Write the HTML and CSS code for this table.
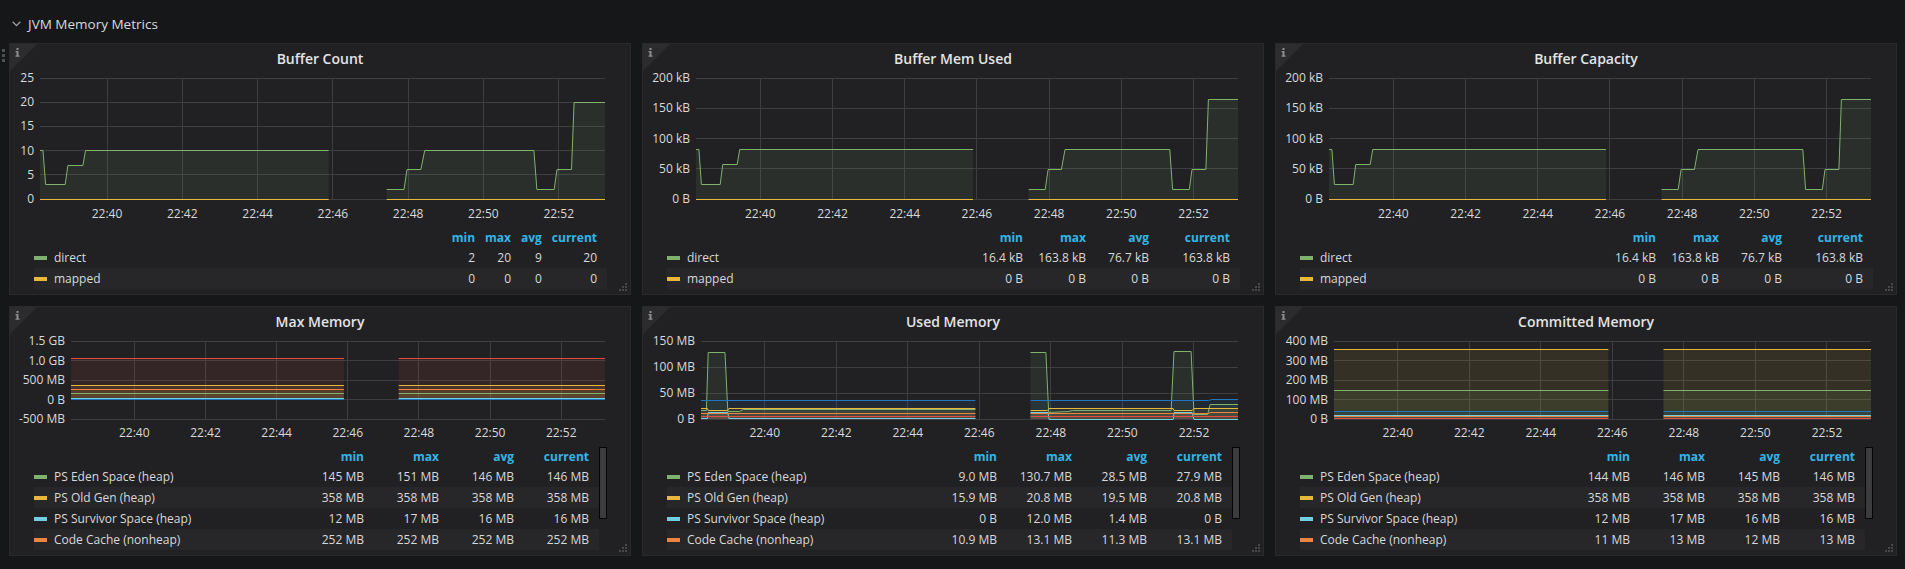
FILE: index.html
```html
<!DOCTYPE html>
<html lang="en">
<head>
<meta charset="utf-8">
<title>JVM Memory Metrics</title>
<link rel="stylesheet" href="styles.css">
</head>
<body>
<div class="dashboard">
  <div class="row-header">
    <svg class="chevron" width="9" height="6" viewBox="0 0 9 6"><polyline points="0.7,0.8 4.5,4.6 8.3,0.8"/></svg>
    <span class="row-title">JVM Memory Metrics</span>
  </div>

  <div class="panel-grid">
    <!-- Row 1 -->
    <section class="panel panel-tall">
      <span class="info-corner"><svg class="info-icon" width="5" height="9" viewBox="0 0 5 9"><rect x="1.5" y="0" width="2" height="2"/><path d="M0.5 3h3v4.5h1v1.2h-4v-1.2h1v-3.3h-1z"/></svg></span>
      <span class="drag-handle"><i></i><i></i><i></i></span>
      <h2 class="panel-title">Buffer Count</h2>
      <svg class="chart chart-tall" id="c-buffer-count" width="620" height="159" viewBox="0 0 620 159"></svg>
      <div class="legend">
        <table class="legend-table">
          <thead><tr><th class="name"></th><th>min</th><th>max</th><th>avg</th><th>current</th></tr></thead>
          <tbody>
            <tr><td class="name"><i class="swatch green"></i>direct</td><td>2</td><td>20</td><td>9</td><td>20</td></tr>
            <tr><td class="name"><i class="swatch yellow"></i>mapped</td><td>0</td><td>0</td><td>0</td><td>0</td></tr>
          </tbody>
        </table>
      </div>
      <svg class="resize-handle" width="9" height="9" viewBox="0 0 9 9"><rect x="6" y="0" width="2" height="2"/><rect x="3" y="3" width="2" height="2"/><rect x="6" y="3" width="2" height="2"/><rect x="0" y="6" width="2" height="2"/><rect x="3" y="6" width="2" height="2"/><rect x="6" y="6" width="2" height="2"/></svg>
    </section>

    <section class="panel panel-tall">
      <span class="info-corner"><svg class="info-icon" width="5" height="9" viewBox="0 0 5 9"><rect x="1.5" y="0" width="2" height="2"/><path d="M0.5 3h3v4.5h1v1.2h-4v-1.2h1v-3.3h-1z"/></svg></span>
      <h2 class="panel-title">Buffer Mem Used</h2>
      <svg class="chart chart-tall" id="c-buffer-mem" width="620" height="159" viewBox="0 0 620 159"></svg>
      <div class="legend">
        <table class="legend-table fixed kb">
          <thead><tr><th class="name"></th><th>min</th><th>max</th><th>avg</th><th>current</th></tr></thead>
          <tbody>
            <tr><td class="name"><i class="swatch green"></i>direct</td><td>16.4 kB</td><td>163.8 kB</td><td>76.7 kB</td><td>163.8 kB</td></tr>
            <tr><td class="name"><i class="swatch yellow"></i>mapped</td><td>0 B</td><td>0 B</td><td>0 B</td><td>0 B</td></tr>
          </tbody>
        </table>
      </div>
      <svg class="resize-handle" width="9" height="9" viewBox="0 0 9 9"><rect x="6" y="0" width="2" height="2"/><rect x="3" y="3" width="2" height="2"/><rect x="6" y="3" width="2" height="2"/><rect x="0" y="6" width="2" height="2"/><rect x="3" y="6" width="2" height="2"/><rect x="6" y="6" width="2" height="2"/></svg>
    </section>

    <section class="panel panel-tall">
      <span class="info-corner"><svg class="info-icon" width="5" height="9" viewBox="0 0 5 9"><rect x="1.5" y="0" width="2" height="2"/><path d="M0.5 3h3v4.5h1v1.2h-4v-1.2h1v-3.3h-1z"/></svg></span>
      <h2 class="panel-title">Buffer Capacity</h2>
      <svg class="chart chart-tall" id="c-buffer-cap" width="620" height="159" viewBox="0 0 620 159"></svg>
      <div class="legend">
        <table class="legend-table fixed kb">
          <thead><tr><th class="name"></th><th>min</th><th>max</th><th>avg</th><th>current</th></tr></thead>
          <tbody>
            <tr><td class="name"><i class="swatch green"></i>direct</td><td>16.4 kB</td><td>163.8 kB</td><td>76.7 kB</td><td>163.8 kB</td></tr>
            <tr><td class="name"><i class="swatch yellow"></i>mapped</td><td>0 B</td><td>0 B</td><td>0 B</td><td>0 B</td></tr>
          </tbody>
        </table>
      </div>
      <svg class="resize-handle" width="9" height="9" viewBox="0 0 9 9"><rect x="6" y="0" width="2" height="2"/><rect x="3" y="3" width="2" height="2"/><rect x="6" y="3" width="2" height="2"/><rect x="0" y="6" width="2" height="2"/><rect x="3" y="6" width="2" height="2"/><rect x="6" y="6" width="2" height="2"/></svg>
    </section>

    <!-- Row 2 -->
    <section class="panel panel-short">
      <span class="info-corner"><svg class="info-icon" width="5" height="9" viewBox="0 0 5 9"><rect x="1.5" y="0" width="2" height="2"/><path d="M0.5 3h3v4.5h1v1.2h-4v-1.2h1v-3.3h-1z"/></svg></span>
      <h2 class="panel-title">Max Memory</h2>
      <svg class="chart chart-short" id="c-max-mem" width="620" height="115" viewBox="0 0 620 115"></svg>
      <div class="legend legend-scroll">
        <table class="legend-table fixed mb">
          <thead><tr><th class="name"></th><th>min</th><th>max</th><th>avg</th><th>current</th></tr></thead>
          <tbody>
            <tr><td class="name"><i class="swatch green"></i>PS Eden Space (heap)</td><td>145 MB</td><td>151 MB</td><td>146 MB</td><td>146 MB</td></tr>
            <tr><td class="name"><i class="swatch yellow"></i>PS Old Gen (heap)</td><td>358 MB</td><td>358 MB</td><td>358 MB</td><td>358 MB</td></tr>
            <tr><td class="name"><i class="swatch cyan"></i>PS Survivor Space (heap)</td><td>12 MB</td><td>17 MB</td><td>16 MB</td><td>16 MB</td></tr>
            <tr><td class="name"><i class="swatch orange"></i>Code Cache (nonheap)</td><td>252 MB</td><td>252 MB</td><td>252 MB</td><td>252 MB</td></tr>
          </tbody>
        </table>
        <div class="scrollbar"><div class="thumb"></div></div>
      </div>
      <svg class="resize-handle" width="9" height="9" viewBox="0 0 9 9"><rect x="6" y="0" width="2" height="2"/><rect x="3" y="3" width="2" height="2"/><rect x="6" y="3" width="2" height="2"/><rect x="0" y="6" width="2" height="2"/><rect x="3" y="6" width="2" height="2"/><rect x="6" y="6" width="2" height="2"/></svg>
    </section>

    <section class="panel panel-short">
      <span class="info-corner"><svg class="info-icon" width="5" height="9" viewBox="0 0 5 9"><rect x="1.5" y="0" width="2" height="2"/><path d="M0.5 3h3v4.5h1v1.2h-4v-1.2h1v-3.3h-1z"/></svg></span>
      <h2 class="panel-title">Used Memory</h2>
      <svg class="chart chart-short" id="c-used-mem" width="620" height="115" viewBox="0 0 620 115"></svg>
      <div class="legend legend-scroll">
        <table class="legend-table fixed mb">
          <thead><tr><th class="name"></th><th>min</th><th>max</th><th>avg</th><th>current</th></tr></thead>
          <tbody>
            <tr><td class="name"><i class="swatch green"></i>PS Eden Space (heap)</td><td>9.0 MB</td><td>130.7 MB</td><td>28.5 MB</td><td>27.9 MB</td></tr>
            <tr><td class="name"><i class="swatch yellow"></i>PS Old Gen (heap)</td><td>15.9 MB</td><td>20.8 MB</td><td>19.5 MB</td><td>20.8 MB</td></tr>
            <tr><td class="name"><i class="swatch cyan"></i>PS Survivor Space (heap)</td><td>0 B</td><td>12.0 MB</td><td>1.4 MB</td><td>0 B</td></tr>
            <tr><td class="name"><i class="swatch orange"></i>Code Cache (nonheap)</td><td>10.9 MB</td><td>13.1 MB</td><td>11.3 MB</td><td>13.1 MB</td></tr>
          </tbody>
        </table>
        <div class="scrollbar"><div class="thumb"></div></div>
      </div>
      <svg class="resize-handle" width="9" height="9" viewBox="0 0 9 9"><rect x="6" y="0" width="2" height="2"/><rect x="3" y="3" width="2" height="2"/><rect x="6" y="3" width="2" height="2"/><rect x="0" y="6" width="2" height="2"/><rect x="3" y="6" width="2" height="2"/><rect x="6" y="6" width="2" height="2"/></svg>
    </section>

    <section class="panel panel-short">
      <span class="info-corner"><svg class="info-icon" width="5" height="9" viewBox="0 0 5 9"><rect x="1.5" y="0" width="2" height="2"/><path d="M0.5 3h3v4.5h1v1.2h-4v-1.2h1v-3.3h-1z"/></svg></span>
      <h2 class="panel-title">Committed Memory</h2>
      <svg class="chart chart-short" id="c-committed-mem" width="620" height="115" viewBox="0 0 620 115"></svg>
      <div class="legend legend-scroll">
        <table class="legend-table fixed mb">
          <thead><tr><th class="name"></th><th>min</th><th>max</th><th>avg</th><th>current</th></tr></thead>
          <tbody>
            <tr><td class="name"><i class="swatch green"></i>PS Eden Space (heap)</td><td>144 MB</td><td>146 MB</td><td>145 MB</td><td>146 MB</td></tr>
            <tr><td class="name"><i class="swatch yellow"></i>PS Old Gen (heap)</td><td>358 MB</td><td>358 MB</td><td>358 MB</td><td>358 MB</td></tr>
            <tr><td class="name"><i class="swatch cyan"></i>PS Survivor Space (heap)</td><td>12 MB</td><td>17 MB</td><td>16 MB</td><td>16 MB</td></tr>
            <tr><td class="name"><i class="swatch orange"></i>Code Cache (nonheap)</td><td>11 MB</td><td>13 MB</td><td>12 MB</td><td>13 MB</td></tr>
          </tbody>
        </table>
        <div class="scrollbar"><div class="thumb"></div></div>
      </div>
      <svg class="resize-handle" width="9" height="9" viewBox="0 0 9 9"><rect x="6" y="0" width="2" height="2"/><rect x="3" y="3" width="2" height="2"/><rect x="6" y="3" width="2" height="2"/><rect x="0" y="6" width="2" height="2"/><rect x="3" y="6" width="2" height="2"/><rect x="6" y="6" width="2" height="2"/></svg>
    </section>
  </div>
</div>
<script src="script.js"></script>
</body>
</html>
```

FILE: styles.css
```css
* { box-sizing: border-box; }

html, body {
  margin: 0;
  padding: 0;
  background: #161719;
}

body {
  width: 1905px;
  height: 569px;
  overflow: hidden;
  font-family: "Open Sans", "Liberation Sans", Arial, sans-serif;
  color: #d8d9da;
}

.dashboard {
  padding: 0 8px 0 9px;
}

/* Row header */
.row-header {
  height: 43px;
  padding: 5px 0 0 3px;
  display: flex;
  align-items: center;
  gap: 7px;
}

.chevron {
  display: block;
  fill: none;
  stroke: #9fa0a2;
  stroke-width: 1.3;
}

.row-title {
  font-size: 13.5px;
  line-height: 20px;
  color: #d8d9da;
}

/* Grid of panels */
.panel-grid {
  display: grid;
  grid-template-columns: repeat(3, 622px);
  column-gap: 11px;
  row-gap: 11px;
}

.panel {
  position: relative;
  display: flex;
  flex-direction: column;
  background: #212124;
  border: 1px solid #2a2a2d;
}

.panel-tall { height: 252px; }
.panel-short { height: 250px; }

.info-corner {
  position: absolute;
  top: 0;
  left: 0;
  width: 0;
  height: 0;
  border-top: 27px solid #2c2c2f;
  border-right: 27px solid transparent;
}

.info-icon {
  position: absolute;
  top: -23px;
  left: 5px;
  fill: #8e8e90;
}

.drag-handle {
  position: absolute;
  left: -8px;
  top: 5px;
  display: flex;
  flex-direction: column;
  gap: 2px;
}

.drag-handle i {
  display: block;
  width: 3px;
  height: 3px;
  background: #505053;
}

.resize-handle {
  position: absolute;
  right: 2px;
  bottom: 2px;
  fill: #48484b;
}

.panel-title {
  margin: 0;
  height: 24px;
  padding-top: 6px;
  line-height: 18px;
  text-align: center;
  font-size: 14px;
  font-weight: 600;
  color: #e3e4e5;
}

/* Charts */
.chart {
  display: block;
  flex: none;
  overflow: visible;
}

.chart text {
  font-family: "Open Sans", "Liberation Sans", Arial, sans-serif;
  font-size: 12px;
  fill: #d8d9da;
}

.chart .grid line {
  stroke: #3e3e42;
  stroke-width: 1;
  shape-rendering: crispEdges;
}

/* Legend */
.legend {
  padding: 0 23px 0 24px;
}

.legend-scroll {
  display: flex;
  align-items: flex-start;
}

.legend-table {
  width: 100%;
  border-collapse: collapse;
  font-size: 12px;
}

.legend-scroll .legend-table {
  flex: 1;
}

.legend-table th {
  height: 20px;
  padding: 0 0 0 10px;
  text-align: right;
  color: #33b5e5;
  font-weight: 700;
  white-space: nowrap;
}

.legend-table td {
  height: 21px;
  padding: 0 0 0 10px;
  text-align: right;
  white-space: nowrap;
  color: #d8d9da;
}

.legend-table .name {
  width: 100%;
  text-align: left;
  padding-left: 0;
}

.legend-table th:last-child,
.legend-table td:last-child {
  padding-right: 10px;
}

.legend-table tbody tr:nth-child(even) td {
  background: #27272a;
}

.legend-table.fixed {
  table-layout: fixed;
}

.legend-table.fixed .name { width: auto; }

.legend-table.mb th:not(.name) { width: 75px; }
.legend-table.mb th:last-child { width: 85px; }

.legend-table.kb th:not(.name) { width: 63px; }
.legend-table.kb th:last-child { width: 91px; }

.swatch {
  display: inline-block;
  width: 13px;
  height: 4px;
  margin-right: 7px;
  vertical-align: middle;
  position: relative;
  top: -1px;
}

.swatch.green { background: #7eb26d; }
.swatch.yellow { background: #eab839; }
.swatch.cyan { background: #6ed0e0; }
.swatch.orange { background: #ef843c; }

.scrollbar {
  width: 8px;
  flex: none;
  padding-top: 1px;
}

.thumb {
  height: 72px;
  background: #3c3c3f;
  border: 1px solid #050505;
}
```

FILE: script.js
```js
(function () {
  var NS = 'http://www.w3.org/2000/svg';
  var T0 = 38.22, T1 = 53.23, RIGHT = 595;
  var A = [38.22, 45.89], B = [47.43, 53.23];
  var C = {
    green: '#7eb26d', yellow: '#eab839', cyan: '#6ed0e0',
    orange: '#ef843c', red: '#e24d42', blue: '#1f78c1'
  };

  function flat(v) { return [[[A[0], v], [A[1], v]], [[B[0], v], [B[1], v]]]; }
  function mul(segs, k) {
    return segs.map(function (s) { return s.map(function (p) { return [p[0], p[1] * k]; }); });
  }
  function el(name, attrs, parent) {
    var e = document.createElementNS(NS, name);
    for (var k in attrs) e.setAttribute(k, attrs[k]);
    if (parent) parent.appendChild(e);
    return e;
  }

  var count = [
    [[38.22, 10], [38.30, 10], [38.37, 3], [38.89, 3], [38.96, 7], [39.36, 7], [39.43, 10], [45.89, 10]],
    [[47.43, 2], [47.89, 2], [47.97, 6], [48.34, 6], [48.44, 10], [51.34, 10], [51.42, 2], [51.88, 2],
     [51.955, 6], [52.34, 6], [52.41, 20], [53.23, 20]]
  ];

  var eden = [
    [[38.22, 16], [38.37, 16], [38.42, 128], [38.89, 128], [38.97, 14], [39.3, 14], [39.4, 18], [45.89, 18]],
    [[47.43, 128], [47.86, 128], [47.94, 12], [48.5, 14], [48.6, 17], [51.36, 17], [51.44, 130.7],
     [51.92, 130], [52.0, 9], [52.38, 9], [52.45, 27.9], [53.23, 27.9]]
  ];
  var oldGen = [
    [[38.22, 20], [38.4, 20], [38.42, 16], [38.97, 16], [39.0, 20], [45.89, 20]],
    [[47.43, 16], [47.9, 16], [47.95, 20], [51.42, 20], [51.44, 16], [51.95, 16], [52.0, 20.8], [53.23, 20.8]]
  ];
  var survivor = [
    [[38.22, 0.5], [38.40, 0.5], [38.42, 12], [38.97, 12], [39.0, 0.5], [45.89, 0.5]],
    [[47.43, 12], [47.92, 12], [47.95, 0], [51.42, 0], [51.44, 12], [51.95, 12], [52.0, 0], [53.23, 0]]
  ];
  var codeCache = [
    [[38.22, 10.9], [45.89, 11.2]],
    [[47.43, 11.2], [52.4, 11.5], [52.45, 13.1], [53.23, 13.1]]
  ];
  var metaUsed = [
    [[38.22, 35], [45.89, 35]],
    [[47.43, 35], [52.4, 35.5], [52.5, 37.5], [53.23, 38]]
  ];

  var charts = {
    'c-buffer-count': {
      left: 30, top: 10, bottom: 131, min: 0, max: 25,
      ticks: [[0, '0'], [5, '5'], [10, '10'], [15, '15'], [20, '20'], [25, '25']],
      series: [{ c: C.green, d: count }, { c: C.yellow, d: flat(0) }]
    },
    'c-buffer-mem': {
      left: 53, top: 10, bottom: 131, min: 0, max: 200,
      ticks: [[0, '0 B'], [50, '50 kB'], [100, '100 kB'], [150, '150 kB'], [200, '200 kB']],
      series: [{ c: C.green, d: mul(count, 8.192) }, { c: C.yellow, d: flat(0) }]
    },
    'c-buffer-cap': {
      left: 53, top: 10, bottom: 131, min: 0, max: 200,
      ticks: [[0, '0 B'], [50, '50 kB'], [100, '100 kB'], [150, '150 kB'], [200, '200 kB']],
      series: [{ c: C.green, d: mul(count, 8.192) }, { c: C.yellow, d: flat(0) }]
    },
    'c-max-mem': {
      left: 61, top: 10, bottom: 88, min: -500, max: 1500,
      ticks: [[-500, '-500 MB'], [0, '0 B'], [500, '500 MB'], [1000, '1.0 GB'], [1500, '1.5 GB']],
      series: [
        { c: C.green, d: flat(146) },
        { c: C.yellow, d: flat(358) },
        { c: C.cyan, d: flat(16) },
        { c: C.orange, d: flat(252) },
        { c: C.red, d: flat(1052) },
        { c: C.blue, d: flat(0) }
      ]
    },
    'c-used-mem': {
      left: 58, top: 10, bottom: 88, min: 0, max: 150,
      ticks: [[0, '0 B'], [50, '50 MB'], [100, '100 MB'], [150, '150 MB']],
      series: [
        { c: C.green, d: eden },
        { c: C.yellow, d: oldGen },
        { c: C.cyan, d: survivor },
        { c: C.orange, d: codeCache },
        { c: C.red, d: flat(4.5) },
        { c: C.blue, d: metaUsed }
      ]
    },
    'c-committed-mem': {
      left: 58, top: 10, bottom: 88, min: 0, max: 400,
      ticks: [[0, '0 B'], [100, '100 MB'], [200, '200 MB'], [300, '300 MB'], [400, '400 MB']],
      series: [
        { c: C.green, d: flat(146) },
        { c: C.yellow, d: flat(358) },
        { c: C.cyan, d: flat(16) },
        { c: C.orange, d: flat(12) },
        { c: C.red, d: flat(5) },
        { c: C.blue, d: flat(37) }
      ]
    }
  };

  Object.keys(charts).forEach(function (id) {
    var cfg = charts[id];
    var svg = document.getElementById(id);
    if (!svg) return;
    var L = cfg.left, W = RIGHT - L;
    function X(t) { return L + (t - T0) / (T1 - T0) * W; }
    function Y(v) { return cfg.bottom - (v - cfg.min) / (cfg.max - cfg.min) * (cfg.bottom - cfg.top); }
    function snap(v) { return Math.round(v - 0.5) + 0.5; }

    var grid = el('g', { 'class': 'grid' }, svg);
    cfg.ticks.forEach(function (tk) {
      var y = snap(Y(tk[0]));
      el('line', { x1: L, x2: RIGHT, y1: y, y2: y }, grid);
      var t = el('text', { x: L - 6, y: (Y(tk[0]) + 4).toFixed(1), 'text-anchor': 'end' }, svg);
      t.textContent = tk[1];
    });
    var labelY = cfg.bottom + (cfg.bottom > 100 ? 19 : 18);
    for (var m = 40; m <= 52; m += 2) {
      var x = snap(X(m));
      el('line', { x1: x, x2: x, y1: cfg.top, y2: cfg.bottom }, grid);
      var tx = el('text', { x: X(m).toFixed(1), y: labelY, 'text-anchor': 'middle' }, svg);
      tx.textContent = '22:' + m;
    }

    var zero = Y(Math.max(cfg.min, 0)).toFixed(1);
    var lines = el('g', {}, svg);
    cfg.series.forEach(function (s) {
      s.d.forEach(function (seg) {
        var pts = seg.map(function (p) { return X(p[0]).toFixed(1) + ',' + snap(Y(p[1])).toFixed(1); });
        var x0 = X(seg[0][0]).toFixed(1), x1 = X(seg[seg.length - 1][0]).toFixed(1);
        el('path', {
          d: 'M' + x0 + ',' + zero + ' L' + pts.join(' L') + ' L' + x1 + ',' + zero + ' Z',
          fill: s.c, 'fill-opacity': 0.1, stroke: 'none'
        }, svg);
        el('path', { d: 'M' + pts.join(' L'), fill: 'none', stroke: s.c, 'stroke-width': 1 }, lines);
      });
    });
    svg.appendChild(lines);
  });
})();
```
